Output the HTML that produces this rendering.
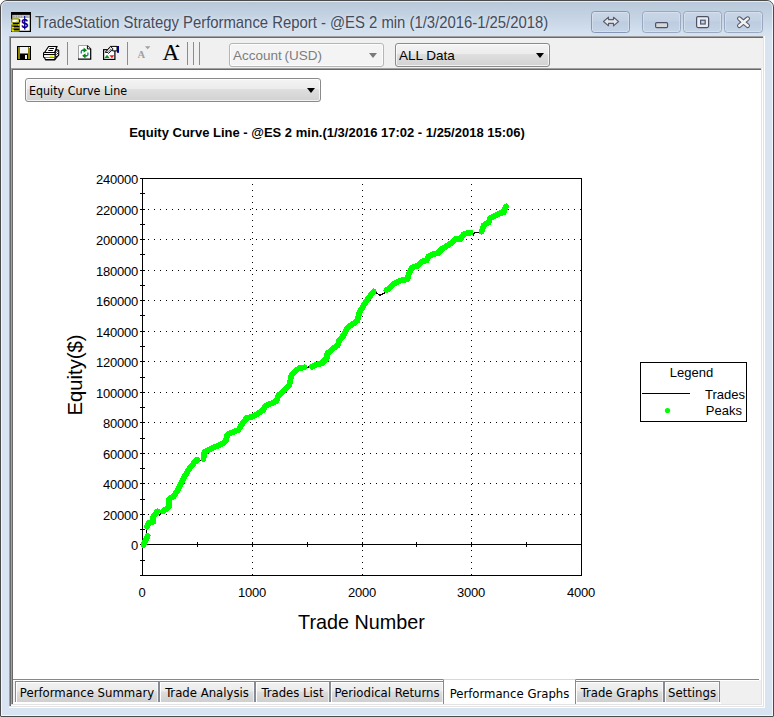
<!DOCTYPE html>
<html>
<head>
<meta charset="utf-8">
<title>TradeStation Strategy Performance Report</title>
<style>
html,body{margin:0;padding:0;background:#fff;}
body{width:774px;height:717px;position:relative;overflow:hidden;font-family:"Liberation Sans",sans-serif;}
.abs{position:absolute;}
#win{position:absolute;left:0;top:0;width:772px;height:715px;border:1px solid #4b4b4b;border-radius:7px 7px 1px 1px;
 background:linear-gradient(to bottom,#b7c7d8 0px,#bfcede 8px,#c8d6e6 20px,#d3e0ee 30px,#d8e4f2 38px,#d8e4f2 100%);}
#win:before{content:"";position:absolute;left:0;top:0;right:0;bottom:0;border:1px solid rgba(255,255,255,.65);border-radius:6px 6px 0 0;}
#title{left:35.4px;top:11.4px;height:22px;line-height:22px;font-size:16.2px;color:#434c5d;white-space:nowrap;transform:scaleX(0.9175);transform-origin:0 0;text-shadow:0 0 4px rgba(255,255,255,.55),0 0 8px rgba(255,255,255,.35);}
.cap{position:absolute;top:11px;width:37px;height:20px;border:1px solid #9aa8c2;border-radius:3.5px;background:linear-gradient(to bottom,#c8d6e7 0,#c3d1e4 45%,#bdcce0 50%,#c6d4e7 100%);box-shadow:inset 0 0 0 1px rgba(255,255,255,.28);}
#client{left:9px;top:36px;width:755px;height:671px;background:#fff;}
#toolbar{left:11px;top:38px;width:751px;height:30px;background:#f0f0f0;}
.sep{position:absolute;top:42px;width:1px;height:23px;background:#8c8c8c;}
.combo{position:absolute;height:22px;border:1px solid #8a8a8a;border-radius:3px;background:linear-gradient(to bottom,#f4f4f4 0,#ececec 44%,#dedede 48%,#d2d2d2 100%);box-shadow:inset 0 0 0 1px rgba(255,255,255,.7);font-family:"DejaVu Sans Condensed","DejaVu Sans","Liberation Sans",sans-serif;font-size:12.35px;line-height:22px;color:#000;white-space:nowrap;}
.combo span{position:absolute;left:3px;top:1.3px;}
.combo i{position:absolute;right:4.8px;top:8.8px;width:0;height:0;border-left:4.9px solid transparent;border-right:4.9px solid transparent;border-top:5.4px solid #000;}
.tab{position:absolute;top:681px;height:20px;border:1px solid #858a96;border-bottom:none;background:linear-gradient(to bottom,#f2f2f2 0,#ebebeb 45%,#dddddd 50%,#cfcfcf 100%);box-shadow:inset 1px 1px 0 #fff, inset -1px 0 0 rgba(255,255,255,.6);font-family:"DejaVu Sans Condensed","DejaVu Sans","Liberation Sans",sans-serif;font-size:13px;letter-spacing:0;line-height:21.4px;color:#000;white-space:nowrap;text-align:center;}
</style>
</head>
<body>
<div id="win"></div>

<!-- title bar -->
<svg class="abs" style="left:11px;top:12px" width="20" height="20" viewBox="0 0 16 16">
 <rect x="0" y="0" width="16" height="16" fill="#000"/>
 <rect x="1" y="2.3" width="14" height="2.4" fill="#c4c4c4"/>
 <path d="M2.3 2.9v1.4M4.3 2.9v1.4M6.3 2.9v1.4M8.3 2.9v1.4M12.8 2.9v1.4" stroke="#8c8c8c" stroke-width=".7"/>
 <rect x="1" y="4.7" width="14" height="10.3" fill="#fff"/>
 <rect x="0" y="5" width="7.2" height="11" rx="1.4" fill="#8a8a00"/>
 <rect x="1" y="6" width="5" height="2.2" rx=".8" fill="#fff"/>
 <path d="M3.4 8 L5.8 6.2 L6.2 7.2 L5 8.2Z" fill="#e6e600"/>
 <rect x="6.4" y="6" width="1" height="2.2" fill="#000"/>
 <rect x="1.2" y="8.6" width="5.2" height="1" fill="#000"/>
 <rect x="1.2" y="11" width="5.4" height="1" fill="#000"/>
 <rect x="1.6" y="13.4" width="5" height="1" fill="#000"/>
 <rect x="0.2" y="8.4" width="1.1" height="1.6" fill="#ffff00"/>
 <rect x="5.8" y="9.8" width="1" height="1" fill="#ffff00"/>
 <rect x="0.8" y="11.8" width="1.6" height="1.2" fill="#e6e600"/>
 <rect x="0.8" y="14" width="1.6" height="1.4" fill="#e6e600"/>
 <text x="10.9" y="12.6" font-family="Liberation Sans, sans-serif" font-weight="bold" font-size="10" fill="#00008b" text-anchor="middle">$</text>
 <rect x="10.5" y="3.2" width=".9" height="10.6" fill="#00008b"/>
</svg>
<div id="title" class="abs">TradeStation Strategy Performance Report - @ES 2 min (1/3/2016-1/25/2018)</div>

<div class="cap" style="left:591px;border-color:#8797b8;"></div>
<div class="cap" style="left:642px;"></div>
<div class="cap" style="left:683px;"></div>
<div class="cap" style="left:724px;"></div>
<svg class="abs" style="left:591px;top:11px" width="172" height="22" viewBox="0 0 172 22">
 <!-- double arrow -->
 <path d="M12.5 10.5 L17.5 6.2 V8.6 H22.5 V6.2 L27.5 10.5 L22.5 14.8 V12.4 H17.5 V14.8 Z" fill="#e4e6ea" stroke="#585e6c" stroke-width="1.1" stroke-linejoin="round"/>
 <!-- minimize -->
 <rect x="64.6" y="11.6" width="12" height="5" rx="1.2" fill="#d6d7da" stroke="#4d5364" stroke-width="1.2"/>
 <!-- maximize -->
 <rect x="105.6" y="5.6" width="12" height="11" rx="1.5" fill="#ececee" stroke="#4d5364" stroke-width="1.2"/>
 <rect x="109.6" y="9.2" width="4.6" height="3.8" fill="#c4d2e5" stroke="#4d5a78" stroke-width="1.2"/>
 <!-- close -->
 <path d="M148.3 7.6 L156.7 14.8 M156.7 7.6 L148.3 14.8" fill="none" stroke="#555b6b" stroke-width="4.6" stroke-linecap="round"/>
 <path d="M148.3 7.6 L156.7 14.8 M156.7 7.6 L148.3 14.8" fill="none" stroke="#f3f3f4" stroke-width="2.5" stroke-linecap="round"/>
</svg>

<!-- client frame edges -->
<div class="abs" style="left:9px;top:36px;width:756px;height:672px;background:#fff;"></div>
<div class="abs" style="left:9px;top:36px;width:755px;height:671px;background:#e3e3e3;"></div>
<div class="abs" style="left:9px;top:36px;width:754px;height:670px;background:#a0a0a0;"></div>
<div class="abs" style="left:10px;top:37px;width:753px;height:669px;background:#696969;"></div>
<div class="abs" style="left:11px;top:38px;width:752px;height:668px;background:#f0f0f0;"></div>
<!-- inner view -->
<div class="abs" style="left:11px;top:68px;width:752px;height:638px;background:#fff;"></div>
<div class="abs" style="left:11px;top:68px;width:751px;height:637px;background:#e3e3e3;"></div>
<div class="abs" style="left:11px;top:68px;width:750px;height:636px;background:#a0a0a0;"></div>
<div class="abs" style="left:12px;top:69px;width:749px;height:635px;background:#696969;"></div>
<div class="abs" style="left:13px;top:70px;width:748px;height:634px;background:#fff;"></div>
<!-- tab strip -->
<div class="abs" style="left:13px;top:680px;width:748px;height:24px;background:#f0f0f0;"></div>
<div class="abs" style="left:13px;top:679px;width:746px;height:1px;background:#828790;"></div>
<div class="abs" style="left:13px;top:680px;width:746px;height:1px;background:#fff;"></div>
<div class="abs" style="left:13px;top:702px;width:708px;height:2px;background:#fff;"></div>


<!-- toolbar icons -->
<svg class="abs" style="left:17px;top:46px" width="14" height="14" viewBox="0 0 14 14" shape-rendering="crispEdges">
 <rect x="0" y="0" width="14" height="14" fill="#000"/>
 <rect x="1" y="1" width="12" height="12" fill="#8a8400"/>
 <rect x="3" y="1" width="8" height="6" fill="#f4f4f4"/>
 <rect x="3" y="8" width="8" height="5" fill="#000"/>
 <rect x="8" y="9" width="2" height="4" fill="#f4f4f4"/>
 <rect x="12" y="1" width="1" height="1" fill="#f4f4f4"/>
</svg>
<svg class="abs" style="left:43px;top:46px" width="17" height="15" viewBox="0 0 17 15">
 <path d="M12 6.5 L13.6 3.6 L15.7 4.2 L15.7 9.2 L12 13.5 Z" fill="#fff" stroke="#000" stroke-width="1.1" stroke-linejoin="round"/>
 <path d="M12.6 5.8l1 1M14.2 5l.9.9M12.6 7.8l1 1M14 7l1 1M13 11l1-1M14.4 9.4l.8-.8" stroke="#000" stroke-width=".9"/>
 <path d="M5.6 0.5 L14 0.5 L11.6 6.5 L1.6 6.5 Z" fill="#fff" stroke="#000" stroke-width="1.15" stroke-linejoin="round"/>
 <path d="M13.4 0.2 L14.4 0.2 L13.8 2 L12.6 2 Z" fill="#000"/>
 <path d="M6.4 2.5H10.9M5.3 4.5H9.9" stroke="#000" stroke-width="1.15"/>
 <rect x="0.5" y="6.5" width="11.6" height="5" rx=".8" fill="#fff" stroke="#000" stroke-width="1.15"/>
 <path d="M0.5 8.5H12" stroke="#000" stroke-width="1.1"/>
 <rect x="6.8" y="9.7" width="3.4" height="1.2" fill="#f0f000"/>
 <path d="M1.4 11.6 L2.4 13.6 H11.8 L12 11.6" fill="#fff" stroke="#000" stroke-width="1.15" stroke-linejoin="round"/>
 <path d="M2.2 13.7H12" stroke="#000" stroke-width="1.3"/>
</svg>
<svg class="abs" style="left:78px;top:45px" width="14" height="15" viewBox="0 0 14 15">
 <path d="M0.5 0.5 H9.5 L12.8 3.8 V14 H0.5 Z" fill="#fff"/>
 <path d="M0.5 14 V0.5 H9.5" fill="none" stroke="#a6a6a6" stroke-width="1"/>
 <path d="M9.3 0.6 L12.7 4 V14.1 H0" fill="none" stroke="#000" stroke-width="1.2"/>
 <path d="M9.4 0.8 V3.9 H12.6" fill="#fff" stroke="#000" stroke-width="1"/>
 <path d="M3.3 8.6 V6.6 Q3.3 5.3 4.6 5.3 H6" fill="none" stroke="#1c8c9c" stroke-width="1.4"/>
 <path d="M5.6 2.6 L9 5.3 L5.6 7.8 Z" fill="#008a10"/>
 <path d="M4.6 5.3H6.2" stroke="#008a10" stroke-width="1.5"/>
 <path d="M9.9 7.4 V9.5 Q9.9 10.8 8.6 10.8 H7" fill="none" stroke="#1c8c9c" stroke-width="1.4"/>
 <path d="M7.5 8.3 L4.1 10.8 L7.5 13.4 Z" fill="#008a10"/>
 <path d="M7 10.8H8.6" stroke="#008a10" stroke-width="1.5"/>
</svg>
<svg class="abs" style="left:103px;top:45px" width="17" height="15" viewBox="0 0 17 15">
 <rect x="0.6" y="4.7" width="11.3" height="9.7" fill="#fff" stroke="#000" stroke-width="1.2"/>
 <path d="M1.4 13 L4 9.8 L6.6 13 Z" fill="#0a9a20"/>
 <path d="M6.4 10.2 H11.4 L8.9 13.2 Z" fill="#ee1c24"/>
 <path d="M7.4 1.4 H14 V5.9 H9.6 Z" fill="#fff" stroke="#000" stroke-width="1"/>
 <path d="M2.2 7.2 L7.4 1.4 L10.2 4 L5.6 8.4 L4 7 L3 8 Z" fill="#fff" stroke="#000" stroke-width=".9" stroke-linejoin="round"/>
 <path d="M3.6 6.8 L7.6 2.6 M4.8 7.4 L8.6 3.4 M5.4 3.8 L7.4 5.8 M4.4 5 L6.4 7 M6.4 2.8 L8.6 5" stroke="#000" stroke-width=".7" stroke-dasharray=".9 .9"/>
 <rect x="14" y="1" width="2" height="6.8" fill="#00008b"/>
</svg>
<!-- small A (disabled) -->
<div class="abs" style="left:137.5px;top:48.8px;font-family:'Liberation Serif',serif;font-weight:bold;font-size:10.6px;line-height:12px;color:#a0a0a0;">A</div>
<svg class="abs" style="left:145px;top:46px" width="6" height="4"><path d="M0 0.3H5.4L2.7 3.2Z" fill="#a0a0a0"/></svg>
<!-- big A -->
<div class="abs" style="left:162.5px;top:40.6px;font-family:'Liberation Serif',serif;font-size:23px;line-height:24px;color:#000;-webkit-text-stroke:.15px #000;">A</div>
<svg class="abs" style="left:174.5px;top:44.4px" width="6" height="4"><path d="M0.2 2.9H4.8L2.5 0.5Z" fill="#000"/></svg>
<div class="sep" style="left:67px"></div>
<div class="sep" style="left:127px"></div>
<div class="sep" style="left:187px"></div>
<div class="sep" style="left:193px"></div>
<div class="sep" style="left:199px"></div>

<div class="combo" style="left:229px;top:43px;width:153px;color:#7d7d7d;background:#f4f4f4;border-color:#b5b5b5;font-family:'Liberation Sans',sans-serif;font-size:13.5px;"><span style="word-spacing:-1px">Account (USD)</span><i style="border-top-color:#7a7a7a;right:5.6px"></i></div>
<div class="combo" style="left:395px;top:43px;width:153px;font-family:'Liberation Sans',sans-serif;font-size:13.5px;"><span>ALL Data</span><i></i></div>
<div class="combo" style="left:25px;top:78px;width:294px;"><span>Equity Curve Line</span><i></i></div>


<div class="tab" style="left:15px;width:142px;">Performance Summary</div>
<div class="tab" style="left:159px;width:94px;">Trade Analysis</div>
<div class="tab" style="left:255px;width:73px;">Trades List</div>
<div class="tab" style="left:330px;width:112px;">Periodical Returns</div>
<div class="tab" style="left:575px;width:87px;">Trade Graphs</div>
<div class="tab" style="left:664px;width:54px;">Settings</div>
<div class="tab" style="left:443px;top:679px;width:131px;height:24px;background:#fff;box-shadow:none;border-top-color:#d5d8dd;line-height:28.6px;">Performance Graphs</div>
<svg class="abs" style="left:0;top:0" width="774" height="717" viewBox="0 0 774 717">
<g shape-rendering="crispEdges" stroke="#000" stroke-width="1" fill="none">
<path d="M140 178.5H582 M142.5 178V576 M581.5 178V576 M140 575.5H582 M140 544.5H582"/>
<path d="M140 193.5H145 M140 209.5H145 M140 224.5H145 M140 239.5H145 M140 254.5H145 M140 270.5H145 M140 285.5H145 M140 300.5H145 M140 315.5H145 M140 331.5H145 M140 346.5H145 M140 361.5H145 M140 377.5H145 M140 392.5H145 M140 407.5H145 M140 422.5H145 M140 438.5H145 M140 453.5H145 M140 468.5H145 M140 483.5H145 M140 499.5H145 M140 514.5H145 M140 529.5H145 M140 544.5H145 M140 560.5H145"/>
<path d="M197.5 542V547 M252.5 542V547 M307.5 542V547 M362.5 542V547 M416.5 542V547 M471.5 542V547 M526.5 542V547 "/>
<path d="M148 209.5H581 M148 239.5H581 M148 270.5H581 M148 300.5H581 M148 331.5H581 M148 361.5H581 M148 392.5H581 M148 422.5H581 M148 453.5H581 M148 483.5H581 M148 514.5H581" stroke-dasharray="1 5"/>
<path d="M252.5 184V575 M362.5 184V575 M471.5 184V575 " stroke-dasharray="1 5"/>
</g>
<polyline points="143.5,544.8 147.7,535.8 146.5,531.0 146.8,528.0 147.0,526.7 148.4,523.2 153.2,521.8 153.2,517.0 157.4,511.4 159.5,514.9 163.0,511.4 169.3,506.5 169.3,498.8 173.5,496.7 177.7,490.4 180.4,484.2 184.6,476.5 188.8,469.5 193.7,463.2 197.2,459.8 200.0,460.9 203.5,459.0 204.2,452.5 208.4,449.8 213.9,447.4 220.9,444.6 225.8,441.1 227.2,434.9 232.8,432.1 238.4,430.0 241.8,424.4 246.7,418.1 252.3,416.7 258.6,413.2 262.8,410.4 265.6,405.6 271.1,403.5 276.7,400.7 278.1,395.8 283.7,390.9 289.3,385.3 291.4,375.6 296.7,369.8 299.5,368.1 304.4,367.4 307.9,367.1 312.1,366.7 316.3,364.6 321.8,363.2 326.7,358.3 327.4,353.5 333.0,348.6 337.9,345.1 339.3,340.2 344.2,334.6 347.6,327.7 352.5,324.2 357.4,320.7 359.5,312.3 363.7,305.3 369.3,297.0 373.6,291.5 376.7,293.2 380.2,295.3 384.4,293.2 386.5,290.4 390.0,287.6 393.5,284.2 398.4,281.4 402.2,280.2 407.4,279.3 408.8,273.7 412.3,267.4 417.2,266.0 422.1,261.6 426.9,260.2 428.3,256.5 433.2,254.2 438.1,253.0 442.4,248.5 448.0,245.4 452.5,241.9 456.0,238.9 460.5,239.3 463.5,234.4 467.7,233.0 470.4,232.7 473.2,235.1 474.6,232.7 478.8,232.4 481.6,231.6 483.7,225.3 488.6,222.5 490.0,218.4 495.6,215.6 499.7,213.2 503.9,212.4 504.6,208.6 506.4,206.5" fill="none" stroke="#000" stroke-width="1.2" shape-rendering="crispEdges"/>
<polyline points="143.5,544.8 147.7,535.8" fill="none" stroke="#00ff00" stroke-width="5.8" stroke-linecap="round" stroke-linejoin="round" shape-rendering="crispEdges"/>
<polyline points="147.0,526.7 148.4,523.2 153.2,521.8 153.2,517.0 157.4,511.4" fill="none" stroke="#00ff00" stroke-width="5.8" stroke-linecap="round" stroke-linejoin="round" shape-rendering="crispEdges"/>
<polyline points="163.0,511.4 169.3,506.5 169.3,498.8 173.5,496.7 177.7,490.4 180.4,484.2 184.6,476.5 188.8,469.5 193.7,463.2 197.2,459.8" fill="none" stroke="#00ff00" stroke-width="5.8" stroke-linecap="round" stroke-linejoin="round" shape-rendering="crispEdges"/>
<polyline points="203.5,459.0 204.2,452.5 208.4,449.8 213.9,447.4 220.9,444.6 225.8,441.1 227.2,434.9 232.8,432.1 238.4,430.0 241.8,424.4 246.7,418.1 252.3,416.7 258.6,413.2 262.8,410.4 265.6,405.6 271.1,403.5 276.7,400.7 278.1,395.8 283.7,390.9 289.3,385.3 291.4,375.6 296.7,369.8 299.5,368.1 304.4,367.4" fill="none" stroke="#00ff00" stroke-width="5.8" stroke-linecap="round" stroke-linejoin="round" shape-rendering="crispEdges"/>
<polyline points="312.1,366.7 316.3,364.6 321.8,363.2 326.7,358.3 327.4,353.5 333.0,348.6 337.9,345.1 339.3,340.2 344.2,334.6 347.6,327.7 352.5,324.2 357.4,320.7 359.5,312.3 363.7,305.3 369.3,297.0 373.6,291.5" fill="none" stroke="#00ff00" stroke-width="5.8" stroke-linecap="round" stroke-linejoin="round" shape-rendering="crispEdges"/>
<polyline points="386.5,290.4 390.0,287.6 393.5,284.2 398.4,281.4 402.2,280.2 407.4,279.3 408.8,273.7 412.3,267.4 417.2,266.0 422.1,261.6 426.9,260.2 428.3,256.5 433.2,254.2 438.1,253.0 442.4,248.5 448.0,245.4 452.5,241.9 456.0,238.9 460.5,239.3 463.5,234.4 467.7,233.0 470.4,232.7" fill="none" stroke="#00ff00" stroke-width="5.8" stroke-linecap="round" stroke-linejoin="round" shape-rendering="crispEdges"/>
<polyline points="481.6,231.6 483.7,225.3 488.6,222.5 490.0,218.4 495.6,215.6 499.7,213.2 503.9,212.4 504.6,208.6 506.4,206.5" fill="none" stroke="#00ff00" stroke-width="5.8" stroke-linecap="round" stroke-linejoin="round" shape-rendering="crispEdges"/>
<rect x="640.5" y="362.5" width="106" height="59" fill="#fff" stroke="#000" stroke-width="1" shape-rendering="crispEdges"/>
<path d="M642 393.5H690" stroke="#000" stroke-width="1" shape-rendering="crispEdges"/>
<circle cx="667.5" cy="410.5" r="2.6" fill="#00ff00"/>
<g font-family="Liberation Sans, sans-serif" font-size="13" fill="#000">
<text x="138" y="184" text-anchor="end" letter-spacing="-0.25">240000</text>
<text x="138" y="215" text-anchor="end" letter-spacing="-0.25">220000</text>
<text x="138" y="245" text-anchor="end" letter-spacing="-0.25">200000</text>
<text x="138" y="276" text-anchor="end" letter-spacing="-0.25">180000</text>
<text x="138" y="306" text-anchor="end" letter-spacing="-0.25">160000</text>
<text x="138" y="337" text-anchor="end" letter-spacing="-0.25">140000</text>
<text x="138" y="367" text-anchor="end" letter-spacing="-0.25">120000</text>
<text x="138" y="398" text-anchor="end" letter-spacing="-0.25">100000</text>
<text x="138" y="428" text-anchor="end" letter-spacing="-0.25">80000</text>
<text x="138" y="459" text-anchor="end" letter-spacing="-0.25">60000</text>
<text x="138" y="489" text-anchor="end" letter-spacing="-0.25">40000</text>
<text x="138" y="520" text-anchor="end" letter-spacing="-0.25">20000</text>
<text x="138" y="550" text-anchor="end" letter-spacing="-0.25">0</text>
<text x="142" y="597" text-anchor="middle" letter-spacing="-0.25">0</text>
<text x="252" y="597" text-anchor="middle" letter-spacing="-0.25">1000</text>
<text x="362" y="597" text-anchor="middle" letter-spacing="-0.25">2000</text>
<text x="471" y="597" text-anchor="middle" letter-spacing="-0.25">3000</text>
<text x="581" y="597" text-anchor="middle" letter-spacing="-0.25">4000</text>
<text x="691.5" y="377" text-anchor="middle">Legend</text>
<text x="745" y="399" text-anchor="end">Trades</text>
<text x="742" y="415" text-anchor="end">Peaks</text>
</g>
<text id="ct" x="327" y="137" text-anchor="middle" font-family="Liberation Sans, sans-serif" font-size="13" font-weight="bold" fill="#000">Equity Curve Line - @ES 2 min.(1/3/2016 17:02 - 1/25/2018 15:06)</text>
<text id="xl" x="361.5" y="628.5" text-anchor="middle" font-family="Liberation Sans, sans-serif" font-size="19.8" fill="#000">Trade Number</text>
<text id="yl" transform="translate(81.5 375) rotate(-90)" text-anchor="middle" font-family="Liberation Sans, sans-serif" font-size="20.3" fill="#000">Equity($)</text>
</svg>
</body>
</html>
